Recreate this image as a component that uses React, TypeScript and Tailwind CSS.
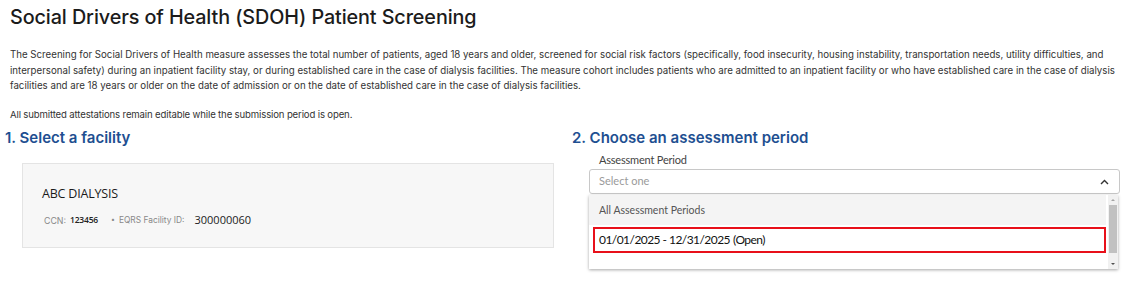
import React from "react";

export default function App() {
  return (
    <div className="w-[1142px] h-[281px] bg-white overflow-hidden" style={{ fontFamily: "Inter, 'Noto Sans', sans-serif" }}>
      <div className="pl-[10px] pr-[14px] pt-[4px]">
        <h1 className="text-[19.8px] leading-[26px] font-medium text-[#1b1b1b] tracking-[-0.1px]">
          Social Drivers of Health (SDOH) Patient Screening
        </h1>
        <p className="mt-[17px] text-[9.7px] leading-[15.5px] text-[#333]">
          The Screening for Social Drivers of Health measure assesses the total number of patients, aged 18 years and older, screened for social risk factors (specifically, food insecurity, housing instability, transportation needs, utility difficulties, and interpersonal safety) during an inpatient facility stay, or during established care in the case of dialysis facilities. The measure cohort includes patients who are admitted to an inpatient facility or who have established care in the case of dialysis facilities and are 18 years or older on the date of admission or on the date of established care in the case of dialysis facilities.
        </p>
        <p className="mt-[13px] text-[9.6px] leading-[15.5px] text-[#333] tracking-[-0.15px]">
          All submitted attestations remain editable while the submission period is open.
        </p>
      </div>
      <div className="grid grid-cols-2 mt-[6px]">
        <div className="pl-[5px]">
          <h2 className="text-[15px] leading-[20px] font-semibold text-[#1e4f91]">1. Select a facility</h2>
          <div className="ml-[17px] mr-[17px] mt-[15px] h-[85px] bg-[#f7f7f7] border border-[#e4e4e4] pl-[19px] pt-[21px]">
            <div className="text-[12.5px] leading-[18px] text-[#1b1b1b] tracking-[-0.2px]" style={{ fontFamily: "'Open Sans', sans-serif" }}>ABC DIALYSIS</div>
            <div className="mt-[9px] flex items-center text-[8.8px] text-[#888]">
              <span className="ml-[2px]">CCN:</span>
              <span className="ml-[4px] text-[8.5px] text-[#222] font-semibold tracking-[-0.2px]" style={{ fontFamily: "'Open Sans', sans-serif" }}>123456</span>
              <span className="ml-[13px] text-[7px]">•</span>
              <span className="ml-[4px] text-[8.4px]">EQRS Facility ID:</span>
              <span className="ml-[10px] text-[11px] text-[#222]" style={{ fontFamily: "'Open Sans', sans-serif" }}>300000060</span>
            </div>
          </div>
        </div>
        <div className="pl-[1px]">
          <h2 className="text-[15px] leading-[20px] font-semibold text-[#1e4f91]">2. Choose an assessment period</h2>
          <div className="ml-[17px] mr-[22px] mt-[4px]" style={{ fontFamily: "Lato, 'Open Sans', sans-serif" }}>
            <div className="pl-[10px] text-[11px] leading-[16px] text-[#444] tracking-[-0.2px]">Assessment Period</div>
            <div className="mt-[1px] h-[25px] border border-[#c8c8c8] rounded-[3px] flex items-center justify-between pl-[9px] pr-[10px]">
              <span className="text-[11px] text-[#9a9a9a]">Select one</span>
              <svg width="9" height="6" viewBox="0 0 9 6" fill="none">
                <path d="M1 5L4.5 1.5L8 5" stroke="#333" strokeWidth="1.4" />
              </svg>
            </div>
            <div className="relative mt-[1px] w-[529px] h-[74px] bg-white shadow-[0_1px_3px_rgba(0,0,0,0.35)] flex">
              <div className="flex-1 flex flex-col">
                <div className="h-[30px] bg-[#f4f4f4] flex items-center pl-[10px] pt-[1px] text-[10.5px] text-[#555]">All Assessment Periods</div>
                <div className="ml-[4px] mt-[2px] h-[26px] border-2 border-[#e8101a] flex items-center pl-[4px] text-[12px] text-[#111] tracking-[-0.55px]">
                  01/01/2025 - 12/31/2025<span className="ml-[3px]">(Open)</span>
                </div>
              </div>
              <div className="w-[10px] ml-[2px] bg-[#f1f1f1] flex flex-col items-center">
                <svg width="10" height="10" viewBox="0 0 10 10"><path d="M3 6L5 4L7 6Z" fill="#a3a3a3" /></svg>
                <div className="w-[8px] h-[48px] bg-[#c1c1c1]" />
                <div className="flex-1" />
                <svg width="10" height="10" viewBox="0 0 10 10"><path d="M3 4L5 6L7 4Z" fill="#505050" /></svg>
              </div>
            </div>
          </div>
        </div>
      </div>
    </div>
  );
}
